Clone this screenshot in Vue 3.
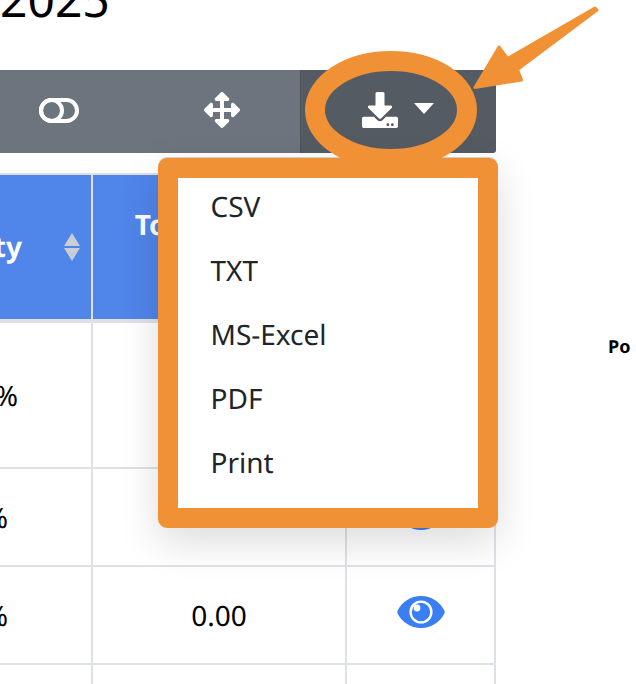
<template>
  <div class="page">
    <main class="content">
      <h1 class="title">2025</h1>

      <div class="toolbar">
        <button class="tool tool-toggle">
          <svg class="toggle-icon" viewBox="0 0 40 25">
            <rect x="2" y="2" width="36" height="21" rx="10.5" fill="none" stroke="#fff" stroke-width="4" />
            <circle cx="12.5" cy="12.5" r="10.5" fill="none" stroke="#fff" stroke-width="4" />
          </svg>
        </button>
        <button class="tool tool-move">
          <svg class="tool-icon" viewBox="0 0 512 512">
            <path fill="#fff" d="M352.201 425.775l-79.196 79.196c-9.373 9.373-24.568 9.373-33.941 0l-79.196-79.196c-15.119-15.119-4.411-40.971 16.971-40.97h51.162L228 284H127.196v51.162c0 21.382-25.851 32.09-40.971 16.971L7.029 272.937c-9.373-9.373-9.373-24.569 0-33.941L86.225 159.8c15.119-15.119 40.971-4.411 40.971 16.971V228H228V127.196h-51.23c-21.382 0-32.09-25.851-16.971-40.971l79.196-79.196c9.373-9.373 24.568-9.373 33.941 0l79.196 79.196c15.119 15.119 4.411 40.971-16.971 40.971h-51.162V228h100.804v-51.162c0-21.382 25.851-32.09 40.97-16.971l79.196 79.196c9.373 9.373 9.373 24.569 0 33.941L425.773 352.2c-15.119 15.119-40.971 4.411-40.97-16.971V284H284v100.804h51.23c21.382 0 32.09 25.851 16.971 40.971z" />
          </svg>
        </button>
        <button class="tool tool-export">
          <svg class="tool-icon" viewBox="0 0 512 512">
            <path fill="#fff" d="M216 0h80c13.3 0 24 10.7 24 24v168h87.7c17.8 0 26.7 21.5 14.1 34.1L269.7 378.3c-7.5 7.5-19.8 7.5-27.3 0L90.1 226.1c-12.6-12.6-3.7-34.1 14.1-34.1H192V24c0-13.3 10.7-24 24-24zm296 376v112c0 13.3-10.7 24-24 24H24c-13.3 0-24-10.7-24-24V376c0-13.3 10.7-24 24-24h146.7l49 49c20.1 20.1 52.5 20.1 72.6 0l49-49H488c13.3 0 24 10.7 24 24zm-124 88c0-11-9-20-20-20s-20 9-20 20 9 20 20 20 20-9 20-20zm64 0c0-11-9-20-20-20s-20 9-20 20 9 20 20 20 20-9 20-20z" />
          </svg>
          <span class="caret"></span>
        </button>
      </div>

      <div class="table">
        <div class="cell head head-qty">
          <span>Quantity</span>
          <span class="sort">
            <i class="sort-up"></i>
            <i class="sort-down"></i>
          </span>
        </div>
        <div class="cell head head-total">Total Profits<br>Value</div>
        <div class="cell head"></div>

        <template v-for="row in rows" :key="row.id">
          <div class="cell body qty" :style="{ paddingRight: row.pad + 'px' }">{{ row.qty }}</div>
          <div class="cell body">{{ row.total }}</div>
          <div class="cell body">
            <svg class="eye" viewBox="0 0 48 32">
              <path fill="#3a7ff2" d="M.6 14.6C5.1 5.8 13.9 0 24 0s18.9 5.8 23.4 14.6c.4.9.4 1.9 0 2.8C42.9 26.2 34.1 32 24 32S5.1 26.2.6 17.4c-.4-.9-.4-1.9 0-2.8z" />
              <circle cx="24" cy="16" r="10.4" fill="none" stroke="#fff" stroke-width="2.4" />
              <circle cx="20" cy="12" r="3.4" fill="#fff" />
            </svg>
          </div>
        </template>

        <div class="cell last"></div>
        <div class="cell last"></div>
        <div class="cell last"></div>
      </div>
    </main>

    <aside class="side">Po</aside>

    <ul class="menu">
      <li v-for="item in exportItems" :key="item">{{ item }}</li>
    </ul>

    <svg class="marks" viewBox="0 0 636 684">
      <ellipse cx="391" cy="110" rx="76" ry="49" fill="none" stroke="#f09136" stroke-width="20" />
      <path
        d="M475 87.5 L499 47 L507.5 58.5 L595 8 L597 10 L517.5 69.5 L521.5 80 Z"
        fill="#f09136"
        stroke="#f09136"
        stroke-width="3"
        stroke-linejoin="round"
      />
    </svg>
  </div>
</template>

<script setup>
const rows = [
  { id: 1, qty: '100.00%', total: '0.00', pad: 73 },
  { id: 2, qty: '0.00%', total: '-', pad: 83 },
  { id: 3, qty: '0.00%', total: '0.00', pad: 83 }
]

const exportItems = ['CSV', 'TXT', 'MS-Excel', 'PDF', 'Print']
</script>

<style scoped>
.page {
  position: relative;
  display: flex;
  width: 636px;
  height: 684px;
  overflow: hidden;
  background: #fff;
  color: #000;
  font-family: "Noto Sans", sans-serif;
  text-rendering: geometricPrecision;
}

.content {
  flex: none;
  width: 496px;
}

.title {
  height: 40px;
  margin: -20px 0 50px;
  font-size: 48px;
  font-weight: 400;
  line-height: 40px;
}

.toolbar {
  display: flex;
  height: 83px;
  margin-left: -22px;
}

.tool {
  display: flex;
  align-items: center;
  justify-content: center;
  gap: 16px;
  box-sizing: border-box;
  height: 83px;
  padding: 0 0 3px;
  border: none;
  background: #6c757d;
}

.tool-toggle {
  width: 162px;
}

.tool-move {
  width: 160px;
  padding-left: 4px;
}

.tool-export {
  width: 196px;
  padding-right: 1px;
  background: #545b62;
  border-left: 1px solid #4e555b;
  border-radius: 0 3px 3px 0;
}

.toggle-icon {
  width: 40px;
  height: 25px;
}

.tool-icon {
  width: 36px;
  height: 36px;
}

.caret {
  width: 0;
  height: 0;
  margin-bottom: 3px;
  border-top: 11px solid #fff;
  border-left: 10px solid transparent;
  border-right: 10px solid transparent;
}

.table {
  display: grid;
  grid-template-columns: 93px 254px 149px;
  grid-template-rows: 148px 146px 98px 98px 20px;
  margin-top: 20px;
  border-top: 2px solid #dee2e6;
}

.cell {
  display: flex;
  align-items: center;
  justify-content: center;
  border-right: 2px solid #dee2e6;
  border-bottom: 2px solid #dee2e6;
  font-size: 28px;
  white-space: nowrap;
}

.body {
  padding-top: 2px;
}

.head {
  border-bottom-width: 4px;
  background: #5085ea;
  color: #fff;
  font-weight: 700;
  line-height: 46px;
}

.head-total {
  display: block;
  padding-top: 27px;
  text-align: center;
}

.head-qty {
  justify-content: flex-end;
  gap: 42px;
  padding-right: 11px;
}

.sort {
  display: flex;
  flex-direction: column;
  gap: 2px;
}

.sort i {
  display: block;
  width: 0;
  height: 0;
  border-left: 8px solid transparent;
  border-right: 8px solid transparent;
}

.sort-up {
  border-bottom: 13px solid #c9ced6;
}

.sort-down {
  border-top: 13px solid #c9ced6;
}

.qty {
  justify-content: flex-end;
}

.eye {
  width: 48px;
  height: 32px;
  margin-bottom: 9px;
}

.last {
  border-bottom: none;
}

.side {
  margin: 335px 0 0 112px;
  font-size: 18px;
  font-weight: 700;
  line-height: 24px;
  white-space: nowrap;
}

.menu {
  position: absolute;
  top: 158px;
  left: 158px;
  box-sizing: border-box;
  width: 340px;
  height: 370px;
  margin: 0;
  padding: 0 0 0 32.5px;
  border: 20px solid #f09136;
  border-radius: 9px;
  background: #fff;
  box-shadow: 0 14px 40px rgba(0, 0, 0, 0.14), 0 -2px 0 -1px #d9d6d0;
  color: #212529;
  font-size: 28px;
  list-style: none;
}

.menu li {
  position: relative;
  top: -3px;
  height: 64px;
  line-height: 64px;
}

.marks {
  position: absolute;
  top: 0;
  left: 0;
  width: 636px;
  height: 684px;
  pointer-events: none;
}
</style>
